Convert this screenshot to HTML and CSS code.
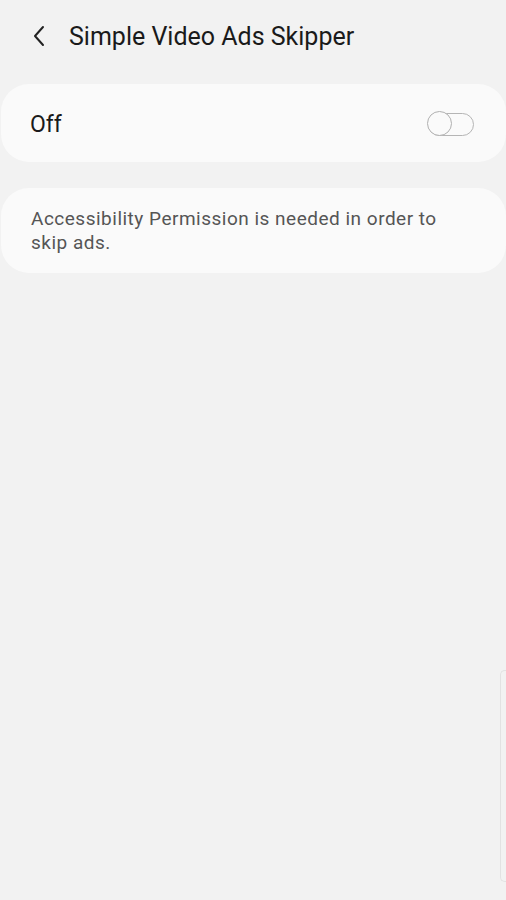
FILE: index.html
```html
<!DOCTYPE html>
<html>
<head>
  <title>Simple Video Ads Skipper</title>
  <link rel="stylesheet" href="styles.css">
</head>
<body>
  <div class="header">
    <svg class="back" width="14" height="22" viewBox="0 0 14 22">
      <path d="M11 2 L3 11 L11 20" fill="none" stroke="#222" stroke-width="2" stroke-linecap="round" stroke-linejoin="round"/>
    </svg>
    <h1>Simple Video Ads Skipper</h1>
  </div>

  <div class="card switch-card">
    <span class="label">Off</span>
    <div class="toggle"><div class="knob"></div></div>
  </div>

  <div class="card info-card">
    <p>Accessibility Permission is needed in order to skip ads.</p>
  </div>

  <div class="scrollbar"></div>
</body>
</html>
```

FILE: styles.css
```css
body {
  margin: 0;
  height: 900px;
  background-color: #f2f2f2;
  font-family: Roboto, "Noto Sans", sans-serif;
  overflow: hidden;
  position: relative;
}

.header {
  display: flex;
  align-items: center;
  height: 72px;
  padding-left: 32px;
}

.back {
  margin-right: 23px;
}

h1 {
  margin: 0;
  font-size: 25px;
  font-weight: 400;
  color: #1a1a1a;
}

.card {
  background-color: #fafafa;
  border-radius: 28px;
  margin-left: 1px;
}

.switch-card {
  margin-top: 12px;
  height: 78px;
  box-sizing: border-box;
  padding: 3px 32px 0 29px;
  display: flex;
  align-items: center;
  justify-content: space-between;
}

.label {
  font-size: 23px;
  color: #1a1a1a;
}

.toggle {
  position: relative;
  width: 44px;
  height: 21px;
  border: 1.5px solid #b5b5b5;
  border-radius: 12px;
}

.knob {
  position: absolute;
  left: -2px;
  top: -3px;
  width: 23px;
  height: 23px;
  border: 1.5px solid #b0b0b0;
  border-radius: 50%;
  background-color: #fafafa;
}

.info-card {
  margin-top: 26px;
  height: 85px;
  padding: 0 30px;
  display: flex;
  align-items: center;
}

.info-card p {
  margin: 0;
  max-width: 420px;
  font-size: 19px;
  letter-spacing: 0.5px;
  line-height: 24px;
  color: #555;
}

.scrollbar {
  position: absolute;
  right: 0;
  top: 670px;
  width: 5px;
  height: 210px;
  border: 1px solid #e2e2e2;
  border-right: none;
  border-radius: 5px 0 0 5px;
}
```
